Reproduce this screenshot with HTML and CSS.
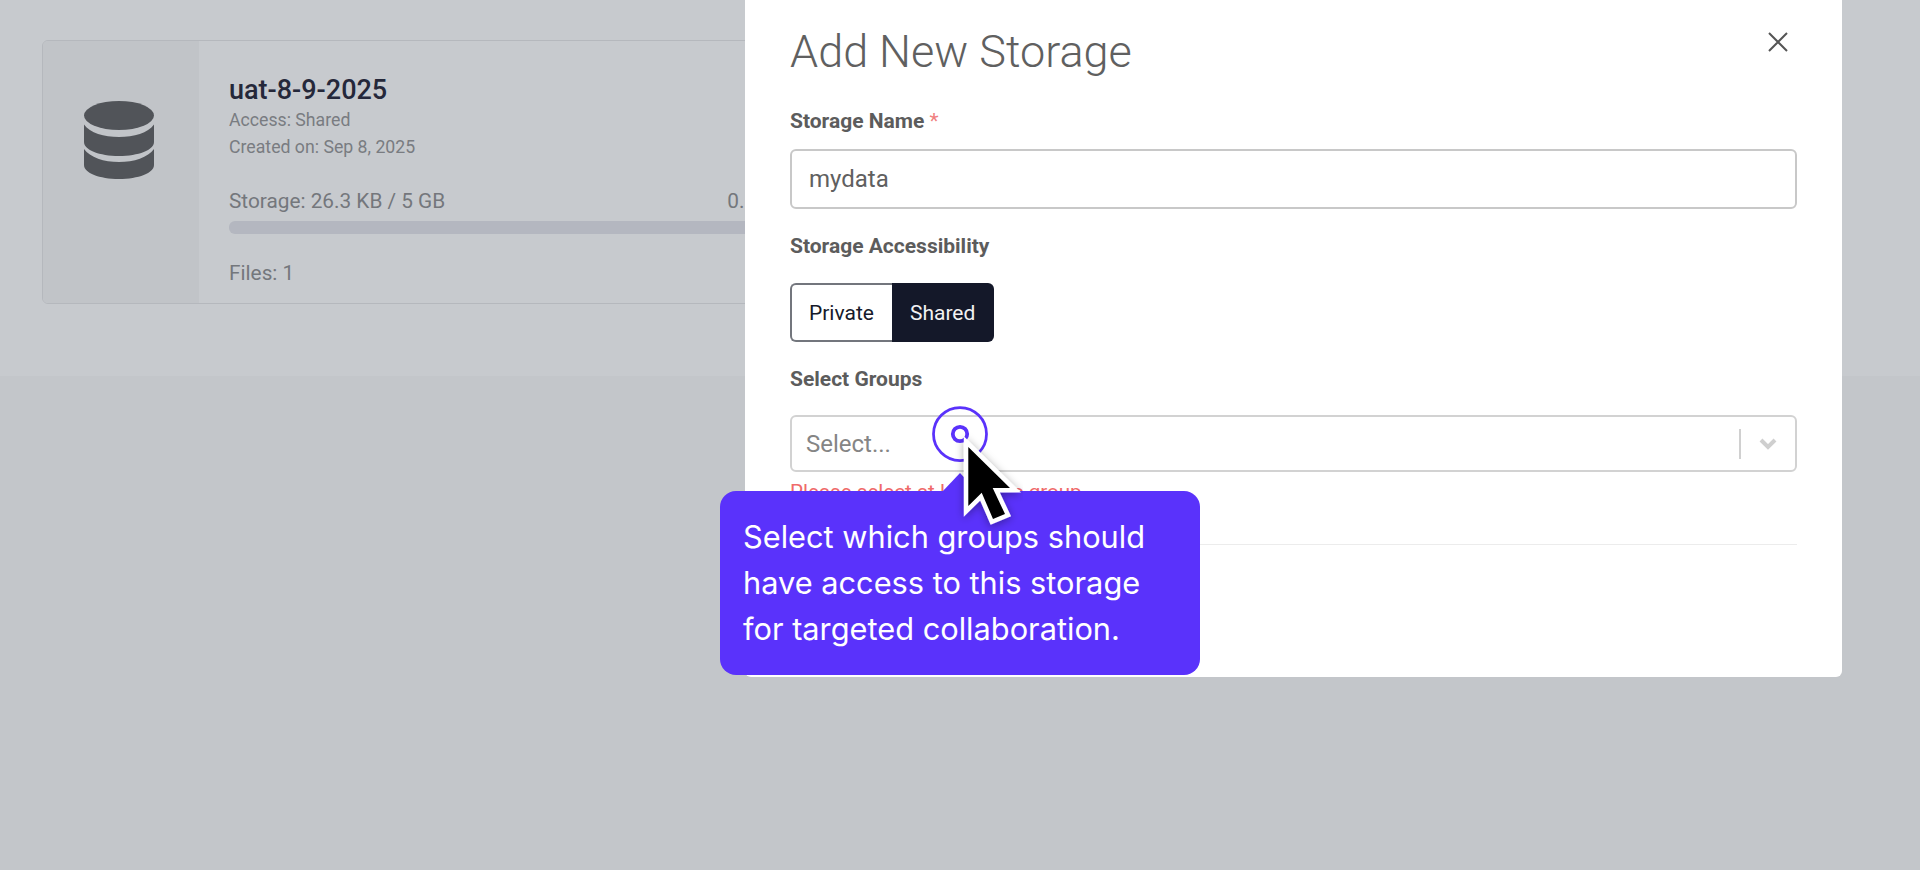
FILE: index.html
```html
<!DOCTYPE html>
<html lang="en">
<head>
<meta charset="utf-8">
<title>Add New Storage</title>
<link rel="stylesheet" href="styles.css">
</head>
<body>
<div class="page">
  <section class="page-top">
    <article class="card">
      <div class="card-thumb">
        <svg class="db-icon" viewBox="0 0 70 78" aria-hidden="true">
          <ellipse cx="35" cy="14.500" rx="35" ry="14.500"/>
          <path d="M0 23.500C6 32 20 36 35 36s29-4 35-12.500V41c0 8-15.500 14-35 14S0 49 0 41z"/>
          <path d="M0 48C6 56.500 20 61 35 61s29-4.500 35-13V64c0 8-15.500 14-35 14S0 72 0 64z"/>
        </svg>
      </div>
      <div class="card-body">
        <h2 class="card-title">uat-8-9-2025</h2>
        <p class="card-meta">Access: Shared</p>
        <p class="card-meta">Created on: Sep 8, 2025</p>
        <div class="usage-row"><span>Storage: 26.3 KB / 5 GB</span><span>0.00%</span></div>
        <div class="usage-bar"></div>
        <p class="card-files">Files: 1</p>
      </div>
    </article>
  </section>
  <section class="page-bottom"></section>
</div>

<div class="modal">
  <header class="modal-head">
    <h1 class="modal-title">Add New Storage</h1>
    <svg class="close-icon" viewBox="0 0 20 20" aria-hidden="true"><path d="M1 1l18 18M19 1L1 19"/></svg>
  </header>
  <label class="field-label label-name">Storage Name <span class="req">*</span></label>
  <div class="text-input">mydata</div>
  <label class="field-label label-access">Storage Accessibility</label>
  <div class="toggle">
    <span class="toggle-opt">Private</span>
    <span class="toggle-opt is-on">Shared</span>
  </div>
  <label class="field-label label-groups">Select Groups</label>
  <div class="select">
    <span class="select-ph">Select...</span>
    <span class="select-sep"></span>
    <svg class="chevron" viewBox="0 0 18 12" aria-hidden="true"><path d="M2 2l7 7 7-7"/></svg>
  </div>
  <p class="field-error">Please select at least one group</p>
  <hr class="modal-rule">
</div>

<div class="tip">
  <span class="tip-arrow"></span>
  Select which groups should have access to this storage for targeted collaboration.
</div>

<svg class="pointer" viewBox="0 0 130 150" aria-hidden="true">
  <defs>
    <filter id="cursor-shadow" x="-30%" y="-30%" width="160%" height="160%">
      <feDropShadow dx="0" dy="2" stdDeviation="4" flood-color="#000" flood-opacity=".35"/>
    </filter>
  </defs>
  <circle class="ring" cx="50" cy="44" r="26.500"/>
  <circle class="dot" cx="50" cy="44" r="7.200"/>
  <path class="arrow" filter="url(#cursor-shadow)" d="M58.300 57V116L71.700 102.700 83 129 95 124 82.700 98H100z"/>
</svg>
</body>
</html>
```
FILE: styles.css
```css
* { box-sizing: border-box; }
html, body { margin: 0; height: 100%; }
body {
  position: relative;
  height: 870px;
  overflow: hidden;
  font-family: Roboto, "Liberation Sans", sans-serif;
  background: #c3c6ca;
}
p, h1, h2 { margin: 0; }

.page { display: flex; flex-direction: column; height: 100%; }
.page-top { height: 376px; padding: 40px 0 0 42px; background: #c7cace; }
.page-bottom { flex: 1; background: #c3c6ca; }

.card {
  display: flex;
  width: 800px;
  height: 264px;
  border: 1px solid #b5b8bd;
  border-radius: 6px;
  overflow: hidden;
}
.card-thumb {
  width: 156px;
  flex: none;
  padding: 60px 0 0 41px;
  background: #c1c4c8;
}
.db-icon { display: block; width: 70px; height: 78px; fill: #515459; }
.card-body { flex: 1; padding: 33px 58px 0 30px; }
.card-title { font-size: 27px; line-height: 32px; font-weight: 500; color: #25283a; }
.card-meta { font-size: 17.700px; line-height: 27px; color: #797c81; }
.card-title + .card-meta { margin-top: 1px; }
.usage-row {
  display: flex;
  justify-content: space-between;
  margin-top: 28px;
  font-size: 20.800px;
  line-height: 24px;
  color: #74777c;
}
.usage-bar { height: 13px; margin-top: 8px; border-radius: 6px; background: #b4b7c0; }
.card-files { margin-top: 27px; font-size: 20.800px; line-height: 24px; color: #74777c; }

.modal {
  position: absolute;
  left: 745px;
  top: 0;
  width: 1097px;
  height: 677px;
  padding: 0 45px;
  background: #fff;
  border-radius: 0 0 6px 6px;
}
.modal-head { display: flex; justify-content: space-between; height: 103px; }
.modal-title {
  margin-top: 24px;
  font-size: 45px;
  line-height: 56px;
  font-weight: 300;
  color: #606060;
}
.close-icon { width: 20px; height: 20px; margin: 32px 9px 0 0; fill: none; stroke: #555; stroke-width: 2; }
.field-label { display: block; font-size: 21px; line-height: 24px; font-weight: 700; color: #5c5c5c; }
.req { color: #f08080; font-weight: 400; }
.label-name { margin-top: 6px; }
.label-access { margin-top: 25px; }
.label-groups { margin-top: 25px; }
.text-input {
  display: flex;
  align-items: center;
  height: 60px;
  margin-top: 16px;
  padding: 0 17px;
  border: 2px solid #c8c8c8;
  border-radius: 6px;
  font-size: 24px;
  color: #606060;
}
.toggle {
  display: inline-flex;
  margin-top: 25px;
  height: 59px;
  vertical-align: top;
}
.toggle-opt {
  display: flex;
  align-items: center;
  padding: 0 18px 0 17px;
  border: 2px solid #73767d;
  border-right: 0;
  border-radius: 6px 0 0 6px;
  font-size: 21px;
  color: #161a2b;
}
.toggle-opt.is-on {
  padding: 0 19px 0 18px;
  border: 0;
  border-radius: 0 6px 6px 0;
  background: #141829;
  color: #f2f2f2;
}
.select {
  display: flex;
  align-items: center;
  height: 57px;
  margin-top: 24px;
  padding: 0 18px 0 14px;
  border: 2px solid #d2d2d2;
  border-radius: 6px;
}
.select-ph { flex: 1; font-size: 24px; color: #858585; }
.select-sep { width: 2px; height: 30px; background: #d0d0d0; margin-right: 18px; }
.chevron { width: 18px; height: 12px; fill: none; stroke: #cfcfcf; stroke-width: 4; }
.field-error { margin-top: 8px; font-size: 20.600px; line-height: 24px; color: #ef6a6a; }
.modal-rule { margin: 40px 0 0; border: 0; border-top: 1px solid #ececec; }

.tip {
  position: absolute;
  left: 720px;
  top: 491px;
  width: 480px;
  height: 184px;
  padding: 23px 23px 0;
  border-radius: 16px;
  background: #5a32fb;
  font-family: Inter, "Liberation Sans", sans-serif;
  font-size: 30.750px;
  line-height: 46px;
  color: #fff;
}
.tip-arrow {
  position: absolute;
  left: 222px;
  top: -18px;
  width: 36px;
  height: 19px;
  background: #5a32fb;
  clip-path: polygon(50% 0, 100% 100%, 0 100%);
}

.pointer { position: absolute; left: 910px; top: 390px; width: 130px; height: 150px; overflow: visible; }
.ring { fill: none; stroke: #5a32fb; stroke-width: 2.750; }
.dot { fill: none; stroke: #5a32fb; stroke-width: 3.800; }
.arrow { fill: #000; stroke: #fff; stroke-width: 9; stroke-linejoin: miter; stroke-miterlimit: 10; paint-order: stroke; }
```
